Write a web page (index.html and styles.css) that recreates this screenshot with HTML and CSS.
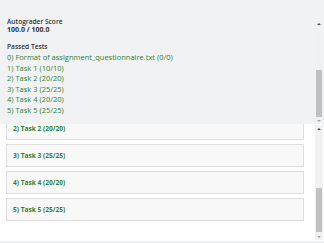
FILE: index.html
```html
<!DOCTYPE html>
<html lang="en">
<head>
<meta charset="utf-8">
<title>Autograder Results</title>
<link rel="stylesheet" href="styles.css">
</head>
<body>
<div class="app">
  <section class="panel">
    <div class="panel-body">
      <div class="label">Autograder Score</div>
      <div class="score">100.0 / 100.0</div>
      <div class="label passed">Passed Tests</div>
      <ul class="tests">
        <li>0) Format of assignment_questionnaire.txt (0/0)</li>
        <li>1) Task 1 (10/10)</li>
        <li>2) Task 2 (20/20)</li>
        <li>3) Task 3 (25/25)</li>
        <li>4) Task 4 (20/20)</li>
        <li>5) Task 5 (25/25)</li>
      </ul>
    </div>
    <div class="scrollbar panel-scroll">
      <div class="sb-btn up"></div>
      <div class="sb-track"><div class="sb-thumb" style="margin-top:43px;height:47px"></div></div>
      <div class="sb-btn down dim"></div>
    </div>
  </section>
  <section class="results">
    <div class="viewport">
      <div class="cards">
        <div class="card">2) Task 2 (20/20)</div>
        <div class="card">3) Task 3 (25/25)</div>
        <div class="card">4) Task 4 (20/20)</div>
        <div class="card">5) Task 5 (25/25)</div>
      </div>
    </div>
    <div class="scrollbar results-scroll">
      <div class="sb-btn up"></div>
      <div class="sb-track"><div class="sb-thumb" style="margin-top:56px;height:44px"></div></div>
      <div class="sb-btn down dim"></div>
    </div>
  </section>
  <div class="footer-strip"></div>
</div>
</body>
</html>
```
FILE: styles.css
```css
html, body {
  margin: 0;
  padding: 0;
  background: #ffffff;
}
body {
  font-family: "Open Sans", "Liberation Sans", sans-serif;
}
.app {
  width: 324px;
  height: 243px;
  display: flex;
  flex-direction: column;
  overflow: hidden;
}
.panel {
  flex: none;
  height: 124px;
  display: flex;
  background: #f1f2f4;
}
.panel-body {
  flex: 1;
  padding: 18px 0 0 7px;
  color: #333333;
}
.label {
  font-size: 6.6px;
  font-weight: 600;
  line-height: 8px;
}
.score {
  font-size: 7px;
  font-weight: 700;
  line-height: 8.5px;
}
.passed {
  margin-top: 8.5px;
}
.tests {
  list-style: none;
  margin: 1px 0 0 0;
  padding: 0;
  color: #2f8434;
  font-size: 7.5px;
  line-height: 10.5px;
}
.scrollbar {
  flex: none;
  width: 8px;
  margin-right: 1px;
  display: flex;
  flex-direction: column;
  background: #f1f1f1;
}
.panel-scroll {
  margin-top: 20px;
}
.results-scroll {
  margin-top: 1px;
  margin-bottom: 1px;
}
.sb-btn {
  flex: none;
  height: 7px;
  display: flex;
  align-items: center;
  justify-content: center;
}
.sb-btn::before {
  content: "";
  width: 0;
  height: 0;
  border-left: 2px solid transparent;
  border-right: 2px solid transparent;
}
.sb-btn.up::before {
  border-bottom: 2px solid #505050;
}
.sb-btn.down::before {
  border-top: 2px solid #505050;
}
.sb-btn.dim.down::before {
  border-top-color: #a3a3a3;
}
.sb-track {
  flex: 1;
  display: flex;
  flex-direction: column;
}
.sb-thumb {
  flex: none;
  margin-left: 1px;
  margin-right: 1px;
  background: #c1c1c1;
}
.results {
  flex: none;
  height: 117px;
  display: flex;
  background: #ffffff;
}
.viewport {
  flex: 1;
  overflow: hidden;
  padding: 0 11px 0 6px;
}
.cards {
  display: flex;
  flex-direction: column;
  gap: 4px;
  margin-top: -7px;
}
.card {
  box-sizing: border-box;
  height: 23px;
  display: flex;
  align-items: center;
  padding-left: 6px;
  border: 1px solid #dedede;
  background: #f8f8f8;
  color: #2f8434;
  font-size: 6.6px;
  font-weight: 700;
}
.footer-strip {
  flex: none;
  height: 2px;
  background: #eceef0;
}
```
